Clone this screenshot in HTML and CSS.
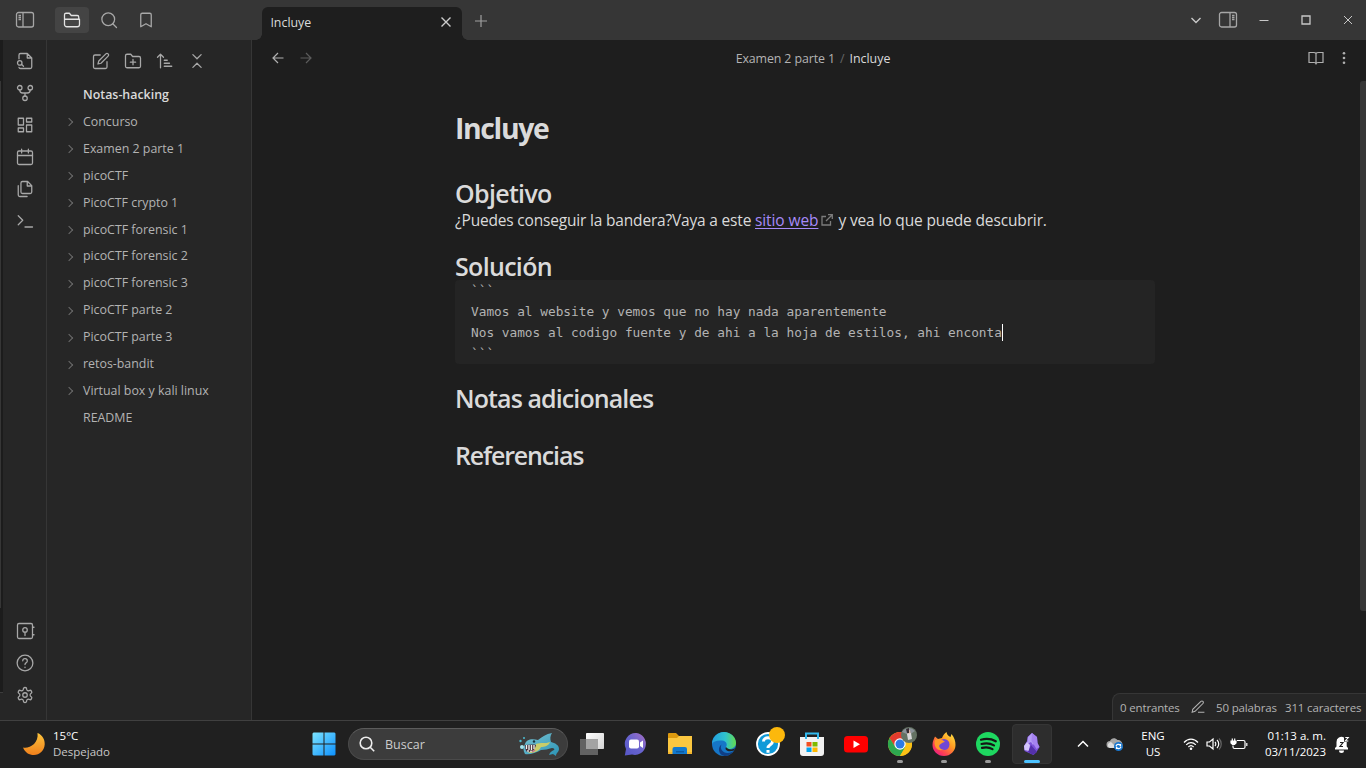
FILE: index.html
```html
<!DOCTYPE html>
<html lang="es">
<head>
<meta charset="utf-8">
<title>Incluye - Notas-hacking</title>
<link rel="stylesheet" href="styles.css">
</head>
<body>
<div class="app">
  <header class="titlebar">
    <div class="title-left">
      <span class="tbtn"><svg class="panel" viewBox="0 0 20 18"><rect x="1.5" y="1.5" width="17" height="14.5" rx="2"/><path d="M8 1.5V16M3.5 4.5h2.5M3.5 6.5h2.5M3.5 8.5h2.5"/></svg></span>
      <span class="tbtn active"><svg class="ico" viewBox="0 0 24 24"><path d="M22 18a3 3 0 0 1-3 3H5a3 3 0 0 1-3-3V5a2 2 0 0 1 2-2h4.500l2.500 3H19a2 2 0 0 1 2 2v3M2 11h20v7"/></svg></span>
      <span class="tbtn"><svg class="ico" viewBox="0 0 24 24"><circle cx="11" cy="11" r="8.500"/><path d="m22 22-5-5"/></svg></span>
      <span class="tbtn"><svg class="ico" viewBox="0 0 24 24"><path d="m19 21-7-4-7 4V5a2 2 0 0 1 2-2h10a2 2 0 0 1 2 2v16z"/></svg></span>
    </div>
    <div class="tab"><span class="t-tab">Incluye</span><svg class="x" viewBox="0 0 12 12"><path d="m1.500 1.500 9 9M10.500 1.500l-9 9"/></svg></div>
    <svg class="plus" viewBox="0 0 12 12"><path d="M6 0v12M0 6h12"/></svg>
    <div class="win">
      <svg class="w-chev" viewBox="0 0 12 12"><path d="m1.500 4 4.500 4.500L10.500 4"/></svg>
      <svg class="panel" viewBox="0 0 20 18"><rect x="1.500" y="1.500" width="17" height="14.500" rx="2"/><path d="M12 1.500V16M14 4.500h2.500M14 6.500h2.500M14 8.500h2.500"/></svg>
      <svg class="w-min" viewBox="0 0 10 10"><path d="M.5 5.500h9"/></svg>
      <svg class="w-max" viewBox="0 0 10 10"><path d="M1 1h8v8H1z"/></svg>
      <svg class="w-close" viewBox="0 0 10 10"><path d="m1 1 8 8M9 1 1 9"/></svg>
    </div>
  </header>

  <div class="body">
    <div class="edge"><i class="edge-a"></i><i class="edge-b"></i><i class="edge-c"></i></div>
    <nav class="ribbon">
      <svg class="ico" viewBox="0 0 24 24"><path d="M4 9V4a2 2 0 0 1 2-2h9l6 6v12a2 2 0 0 1-2 2H6a2 2 0 0 1-2-1.500M15 2v6h6"/><circle cx="5" cy="14.500" r="3"/><path d="m10 19-2.500-2.500"/></svg>
      <svg class="ico" viewBox="0 0 24 24"><circle cx="12" cy="19" r="3"/><circle cx="5" cy="5" r="3"/><circle cx="19" cy="5" r="3"/><path d="M5 8c0 3 1.500 4 4 4h6c2.500 0 4-1 4-4M12 12v4"/></svg>
      <svg class="ico" viewBox="0 0 24 24"><path d="M3 3h7v9H3zM14 3h7v5h-7zM14 12h7v9h-7zM3 16h7v5H3z"/></svg>
      <svg class="ico" viewBox="0 0 24 24"><rect x="2" y="4" width="20" height="18" rx="2"/><path d="M16.500 1.500v5M7.500 1.500v5M2 10h20"/></svg>
      <svg class="ico" viewBox="0 0 24 24"><path d="M15.500 2H8.600a2 2 0 0 0-2 2v12a2 2 0 0 0 2 2h10.400a2 2 0 0 0 2-2V7.500zM15 2v6h6M3 7.600V20a2 2 0 0 0 2 2h9.800"/></svg>
      <svg class="ico" viewBox="0 0 24 24"><path d="m3 17 6-6-6-6M12 20h10"/></svg>
      <span class="grow"></span>
      <svg class="ico" viewBox="0 0 24 24"><rect x="2" y="2" width="20" height="20" rx="2"/><circle cx="12" cy="10.500" r="3"/><path d="M12 13.500V18M22 7h2M22 17h2"/></svg>
      <svg class="ico" viewBox="0 0 24 24"><circle cx="12" cy="12" r="10.500"/><path d="M9 9a3 3 0 0 1 6 .500c0 2-3 2.500-3 4.500M12 17.500v.500"/></svg>
      <svg class="ico" viewBox="0 0 24 24"><path d="M12.220 2h-.44a2 2 0 0 0-2 2v.18a2 2 0 0 1-1 1.730l-.43.250a2 2 0 0 1-2 0l-.15-.08a2 2 0 0 0-2.730.730l-.22.380a2 2 0 0 0 .73 2.730l.15.100a2 2 0 0 1 1 1.720v.510a2 2 0 0 1-1 1.740l-.15.090a2 2 0 0 0-.73 2.730l.22.380a2 2 0 0 0 2.730.730l.15-.08a2 2 0 0 1 2 0l.43.250a2 2 0 0 1 1 1.730V20a2 2 0 0 0 2 2h.44a2 2 0 0 0 2-2v-.18a2 2 0 0 1 1-1.730l.43-.25a2 2 0 0 1 2 0l.15.080a2 2 0 0 0 2.730-.73l.22-.39a2 2 0 0 0-.73-2.730l-.15-.08a2 2 0 0 1-1-1.740v-.5a2 2 0 0 1 1-1.740l.15-.09a2 2 0 0 0 .73-2.730l-.22-.38a2 2 0 0 0-2.730-.73l-.15.080a2 2 0 0 1-2 0l-.43-.25a2 2 0 0 1-1-1.730V4a2 2 0 0 0-2-2z"/><circle cx="12" cy="12" r="3"/></svg>
    </nav>
    <aside class="sidebar">
      <div class="tools">
        <svg class="ico" viewBox="0 0 24 24"><path d="M11 4H4a2 2 0 0 0-2 2v14a2 2 0 0 0 2 2h14a2 2 0 0 0 2-2v-7M18.500 2.500a2.120 2.120 0 0 1 3 3L12 15l-4 1 1-4z"/></svg>
        <svg class="ico" viewBox="0 0 24 24"><path d="M4 21h16a2 2 0 0 0 2-2V8a2 2 0 0 0-2-2h-8.500L9 3H4a2 2 0 0 0-2 2v14c0 1.100.9 2 2 2zM12 10v7M8.500 13.500h7"/></svg>
        <svg class="ico" viewBox="0 0 24 24"><path d="M11 11h4M11 15h7M11 19h10M2 7l4-4 4 4M6 4v17"/></svg>
        <svg class="ico" viewBox="0 0 24 24"><path d="m6.500 20.500 5.500-5.500 5.500 5.500M6.500 3.500 12 9l5.500-5.500"/></svg>
      </div>
      <ul class="tree">
        <li class="vault">Notas-hacking</li>
        <li class="dir">Concurso</li>
        <li class="dir">Examen 2 parte 1</li>
        <li class="dir">picoCTF</li>
        <li class="dir">PicoCTF crypto 1</li>
        <li class="dir">picoCTF forensic 1</li>
        <li class="dir">picoCTF forensic 2</li>
        <li class="dir">picoCTF forensic 3</li>
        <li class="dir">PicoCTF parte 2</li>
        <li class="dir">PicoCTF parte 3</li>
        <li class="dir">retos-bandit</li>
        <li class="dir">Virtual box y kali linux</li>
        <li>README</li>
      </ul>
    </aside>
    <main class="main">
      <div class="viewhead">
        <div class="nav">
          <svg viewBox="0 0 12 12"><path d="M11.500 6H1M6 1 1 6l5 5"/></svg>
          <svg class="dim" viewBox="0 0 12 12"><path d="M.5 6H11M6 1l5 5-5 5"/></svg>
        </div>
        <div class="crumbs"><span class="c1">Examen 2 parte 1</span><span class="sep">/</span><span class="c2">Incluye</span></div>
        <div class="acts">
          <svg class="book" viewBox="0 0 16 14"><path d="M8 2.500V13.500M8 2.500C7.500 1.500 6.500 1.500 5.500 1.500H1v10h5c1 0 2 .5 2 1.500 0-1 1-1.500 2-1.500h5v-10h-4.500C9.500 1.500 8.500 1.500 8 2.500z"/></svg>
          <svg class="dots" viewBox="0 0 4 14"><circle cx="2" cy="2.300" r="1.300"/><circle cx="2" cy="7" r="1.300"/><circle cx="2" cy="11.700" r="1.300"/></svg>
        </div>
      </div>
      <article class="note">
        <h1>Incluye</h1>
        <h2 class="a">Objetivo</h2>
        <p><span class="p1">¿Puedes conseguir la bandera?Vaya a este </span><a class="link">sitio web</a><svg class="ext" viewBox="0 0 12 12"><path d="M5 2.500H1v8.500h8.500V7M7 .700h4.300V5M11 1 5 7"/></svg><span class="p2">y vea lo que puede descubrir.</span></p>
        <h2 class="b">Solución</h2>
        <div class="code"><div>```</div><div>Vamos al website y vemos que no hay nada aparentemente</div><div class="cl"><span class="mono">Nos vamos al codigo fuente y de ahi a la hoja de estilos, ahi enconta</span><i class="caret"></i></div><div>```</div></div>
        <h2 class="c">Notas adicionales</h2>
        <h2 class="d">Referencias</h2>
      </article>
      <div class="scroll"></div>
      <div class="status"><span class="s1">0 entrantes</span><svg class="pen" viewBox="0 0 24 24"><path d="M12 21h11M17 2.500a2.120 2.120 0 0 1 3.500 3.500L7 19.500l-5 1.500 1-5z"/></svg><span class="s2">50 palabras</span><span class="s3">311 caracteres</span></div>
    </main>
  </div>

  <footer class="taskbar">
    <div class="weather">
      <svg viewBox="0 0 24 24"><defs><linearGradient id="moon" x1="0" y1="0" x2="0" y2="1"><stop offset="0" stop-color="#fcc43c"/><stop offset="1" stop-color="#f0801c"/></linearGradient></defs><path fill="url(#moon)" d="M15.500 1c5 2 7.500 6.500 7.200 11.500C22.300 18.500 17.500 23 12 23 7 23 3 20.500 1 15.500c6 1.500 16-4 14.500-14.500z"/></svg>
      <div class="wtext"><div class="k1">15°C</div><div class="k2">Despejado</div></div>
    </div>
    <svg class="start" viewBox="0 0 24 24"><defs><linearGradient id="wn" gradientUnits="userSpaceOnUse" x1="0" y1="0" x2="24" y2="24"><stop offset="0" stop-color="#7fe6ff"/><stop offset="1" stop-color="#0a8fff"/></linearGradient></defs><path fill="url(#wn)" d="M1.500.500h10v11H.500v-10zM12.500.500h10l1 1v10h-11zM.500 12.500h11v11h-10l-1-1zM12.500 12.500h11v10l-1 1h-10z"/></svg>
    <div class="search">
      <svg class="mag" viewBox="0 0 16 16"><circle cx="7" cy="7" r="5.800"/><path d="m11.200 11.200 4 4"/></svg>
      <span class="bus">Buscar</span>
      <svg class="fish" viewBox="0 0 42 25"><defs><linearGradient id="fs" x1="0" y1="0" x2="1" y2="1"><stop offset="0" stop-color="#7cc4d4"/><stop offset="1" stop-color="#2a93b4"/></linearGradient></defs>
        <path fill="url(#fs)" d="M6 12c1-4 6-6 13-4 4-3 8-6 14-7-2 3-2 6-1 9 4 1 8 3 8 7 0 3-3 4-3 7l-3-2-4 1c1-3 3-4 5-5 1-1 0-2-2-2-4 1-7 2-11 2-5 3-12 5-16 4-2-3-2-7 0-10z"/>
        <path fill="#c9cd6a" d="M17 12c5-2 9 0 14-2-1 4-6 5-9 5-2 4-6 6-13 6l6-4z"/>
        <path fill="#4b2c3a" d="M6 13c4 0 8-1 11 0-1 5-4 7-9 7-2-2-2-5-2-7z"/>
        <path stroke="#eef8f2" stroke-width="1.300" d="M7.500 13v4M10 13v5M12.500 13v5M15 13v4M9 20v-2M12 20v-1.500"/>
        <path stroke="#c56f95" stroke-width="1.500" d="m13 20 3-2"/>
        <circle cx="15" cy="9.500" r="1.200" fill="#17323e"/><circle cx="3" cy="15" r="2" fill="#a4e4ee"/><circle cx="1.500" cy="9" r="1.200" fill="#4bbbd0"/><circle cx="5" cy="6" r="1" fill="#4bbbd0"/></svg>
    </div>
    <div class="apps">
      <span class="app-i"><svg viewBox="0 0 24 24"><defs><linearGradient id="tv" x1="0" y1="0" x2="1" y2="1"><stop offset="0" stop-color="#fff"/><stop offset="1" stop-color="#d4d4d4"/></linearGradient></defs><rect x="6" y="1" width="18" height="16" rx=".8" fill="url(#tv)"/><path fill="#626262" d="M0 7h18v16H0z"/><path fill="#a3a3a3" d="M6 7h12v10H6z"/></svg></span>
      <span class="app-i"><svg viewBox="0 0 24 24"><defs><linearGradient id="tm" x1="1" y1="0" x2="0" y2="1"><stop offset="0" stop-color="#a66fc4"/><stop offset=".5" stop-color="#6864cf"/><stop offset="1" stop-color="#5656c6"/></linearGradient></defs><path fill="url(#tm)" d="M12.500 1A11 11 0 1 1 8 22.500L.800 23.500 2 17A11 11 0 0 1 12.500 1z"/><rect x="5" y="7.500" width="10" height="9" rx="2" fill="#fff"/><path fill="#fff" d="m16 10.500 3-2v7.500l-3-2z"/></svg></span>
      <span class="app-i"><svg viewBox="0 0 24 24"><path fill="#dd9a0f" d="M0 2q0-1 1-1h7l3 3v4H0z"/><path fill="#fbc740" d="M0 6h9l2-2h13v18H0z"/><path fill="#f4b52c" d="M0 20h24v2H0z"/><path fill="#1279ce" d="M4.500 22v-5q0-2 2-2h10.500q2 0 2 2v5z"/><path fill="#0c5aa2" d="M8 19h8v1.500H8z"/></svg></span>
      <span class="app-i"><svg viewBox="0 0 24 24"><defs><linearGradient id="eg" x1="0" y1="0" x2="1" y2="0"><stop offset="0" stop-color="#239fdf"/><stop offset=".55" stop-color="#2fc2cf"/><stop offset="1" stop-color="#64dc4e"/></linearGradient></defs><circle cx="12" cy="12" r="12" fill="#1676c7"/><path fill="url(#eg)" d="M0 12C0 5 5.500 0 12 0s12 5 12 11c0 4-4 6-7 6-2.500 0-3.500-1-3-2 1.500-2 1-6-4-6.500C5 8 1 9.500 0 12z"/><path fill="#103f85" d="M9.500 12.500c-2 4 1 8.500 6 8.500 3 0 5-1 6.500-2.500C20 22 16 24 12.500 24 6 23 5.500 15 9.500 12.500z"/><path fill="#202020" d="M14 15c2 3 7 3 9.500 1L22 18.500c-5 2-10 0-8-3.500z"/></svg></span>
      <span class="app-i"><svg class="over" viewBox="0 0 24 24"><circle cx="12" cy="12" r="11" fill="#109ad8" stroke="#fff" stroke-width="1.800"/><path fill="none" stroke="#fff" stroke-width="3" d="M7.500 9.500c0-5 9-5 9 0 0 3.500-4.500 3-4.500 6.500M12 18v2.800"/><circle cx="21" cy="3" r="8" fill="#fcb80c"/></svg></span>
      <span class="app-i"><svg viewBox="0 0 24 24"><path fill="#f2f2f2" d="M0 5h24v16q0 3-3 3H3q-3 0-3-3z"/><path fill="none" stroke="#32b9ee" stroke-width="2" d="M6 7V1.500h12V7"/><path fill="#f25022" d="M6.500 10h5v4.500h-5z"/><path fill="#7fba00" d="M12.500 10h5v4.500h-5z"/><path fill="#00a4ef" d="M6.500 15.500h5V20h-5z"/><path fill="#ffb900" d="M12.500 15.500h5V20h-5z"/></svg></span>
      <span class="app-i"><svg viewBox="0 0 24 24"><rect y="4" width="24" height="16.500" rx="3.500" fill="#f00"/><path fill="#fff" d="m9.500 8.500 6.500 3.700-6.500 3.700z"/></svg></span>
      <span class="app-i run"><svg class="over" viewBox="0 0 24 24"><circle cx="12" cy="12" r="12" fill="#fbc116"/><path fill="#e33b2e" d="M12 12h12A12 12 0 0 0 1.600 6L7 15z"/><path fill="#2da94f" d="M1.600 6A12 12 0 0 0 12 24l5.500-9.500H7z"/><path fill="#fbc116" d="M12 24A12 12 0 0 0 23 7H12l5.500 8z"/><circle cx="12" cy="12" r="5.700" fill="#fff"/><circle cx="12" cy="12" r="4.500" fill="#2c7be5"/><circle cx="21" cy="3" r="8" fill="#647263"/><path fill="#8b9299" d="M14 0a8 8 0 0 1 13-1l-6 4z"/><path fill="#dab1a0" d="m19-2 3 0 1 5-3 1z"/><path fill="#d8d8da" d="m19 2 4-1 1 6-4 1z"/><path fill="#342c31" d="m18-3 3-1v5h-2z"/></svg></span>
      <span class="app-i run"><svg viewBox="0 0 24 24"><defs><linearGradient id="ff" x1="1" y1="0" x2=".2" y2="1"><stop offset="0" stop-color="#fff04a"/><stop offset=".45" stop-color="#ff9a22"/><stop offset=".8" stop-color="#fb3d56"/><stop offset="1" stop-color="#e71b8b"/></linearGradient></defs><path fill="url(#ff)" d="M3 4.500 6 7l4-1c1-3 3-5 4.500-6 .5 3 2 4 4 5l1-3c3 4 4 7 4 11 0 6-5 11-11.500 11S.500 19 .500 13C.500 9 2 7 3 4.500z"/><circle cx="12" cy="12.500" r="5.500" fill="#7047d4"/><path fill="#ff9a28" d="M3 8c3-2 7-1 10 2-2 0-3 1-5 2.500C6 14 8 18 12 17.500c-6 3-11-3-9-9.500z"/></svg></span>
      <span class="app-i run"><svg viewBox="0 0 24 24"><circle cx="12" cy="12" r="12" fill="#1ed760"/><path fill="none" stroke="#151515" stroke-linecap="round" stroke-width="2.200" d="M5 7.800c5-1.400 10.500-.9 14.800 1.500M5.500 12c4.300-1.200 9-.7 12.500 1.400M6 15.900c3.500-1 7.500-.6 10.500 1.200"/></svg></span>
      <span class="app-i sel"><svg viewBox="0 0 24 24"><path fill="#7c52d8" d="m12 1 5 4 .500 6 2 4-3 5-3 3-9-4-.5-5 3-5 .5-4z"/><path fill="#b49cf5" d="m12 1-4 4-1 7 4-2 2 3 3-4z"/><path fill="#a583f0" d="m12 1 5 4 .5 6 2 4-3 2-5-8z"/><path fill="#d4c5fc" d="m7 10 3 3-1 6-4.500-1-.5-4z"/><path fill="#5431ab" d="m11 13 6 7-4 3-5-3z"/></svg></span>
    </div>
    <div class="tray">
      <svg class="t-up" viewBox="0 0 12 8"><path d="m1 6.500 5-5 5 5"/></svg>
      <svg class="t-cloud" viewBox="0 0 16 14"><path fill="#a7a7a7" d="M3 11a3.500 3.500 0 0 1 0-7C4 1 8 0 10.500 3c3 0 5 2 5 5v3z"/><path fill="#ddd" d="M3 11c-3-1-3-5 1-6l6 6z"/><circle cx="11.500" cy="9.500" r="4.500" fill="#1977cf"/><path fill="none" stroke="#fff" stroke-width="1.200" d="M9 9c1-2 3-2 4.500-.5V7M14 10c-1 2-3 2-4.500.5V12"/></svg>
      <div class="lang"><span class="g1">ENG</span><span class="g2">US</span></div>
      <svg class="t-wifi" viewBox="0 0 16 14"><path d="M1 5.500c4-4.500 10-4.500 14 0M3.200 7.800c3-3 6.600-3 9.600 0M5.400 10c1.700-1.700 3.500-1.700 5.200 0"/><circle cx="8" cy="11.800" r="1.300"/></svg>
      <svg class="t-vol" viewBox="0 0 16 14"><path d="M1 5v4h2.500L7 12V2L3.500 5zM9 5c1 1 1 3 0 4M11 3c2.300 2 2.300 6 0 8"/><path class="faint" d="M13 1.500c3 3 3 8 0 11"/></svg>
      <svg class="t-bat" viewBox="0 0 18 14"><path d="M7 3.500h6.500q1.500 0 1.500 1.500v5q0 1.500-1.500 1.500h-9Q3 11.500 3 10V8.500M16.800 6v3"/><path fill="#fff" d="M1 4h5v2L4.500 7.500H2.500L1 6zM2.300 4V1.500M4.700 4V1.500"/></svg>
      <div class="clock"><span class="h1c">01:13 a. m.</span><span class="h2c">03/11/2023</span></div>
      <svg class="t-bell" viewBox="0 0 15 17"><path fill="#fff" d="M0 13.500V12l1.500-1.500V6A5 5 0 0 1 9 1.500V6h2.700v4.500L13 12v1.500zM4 14.500h5a2.500 2.500 0 0 1-5 0z"/><path fill="none" stroke="#202020" d="M5 6.500h3l-3 4h3"/><path fill="none" stroke="#fff" stroke-width="1.100" d="M10.300 1.500h3l-3 3.500h3"/></svg>
    </div>
  </footer>
</div>
</body>
</html>
```
FILE: styles.css
```css
* { box-sizing: border-box; }
body { margin: 0; background: #1e1e1e; color: #dadada; font-family: "Open Sans", "Noto Sans", sans-serif; }
svg { display: block; flex: none; fill: none; overflow: visible; }
.app { width: 1366px; height: 768px; display: flex; flex-direction: column; overflow: hidden; }
.grow { flex: 1; }

.ico { width: 18px; height: 18px; stroke: #a8a8a8; stroke-width: 1.7; stroke-linecap: round; stroke-linejoin: round; }
.panel { width: 20px; height: 18px; stroke: #a6a6a6; stroke-width: 1.3; }

.titlebar { height: 40px; background: #363636; display: flex; flex: none; }
.title-left { width: 262px; padding: 7px 0 0 8px; display: flex; }
.tbtn { width: 34px; height: 26px; margin-right: 3px; border-radius: 4px; display: flex; align-items: center; justify-content: center; }
.tbtn:first-child { margin-right: 13px; }
.tbtn.active { background: #444; }
.tbtn.active .ico { stroke: #e3e3e3; }
.tab { position: relative; width: 200px; height: 33px; margin-top: 7px; padding: 0 10px 3px 8.4px; background: #1e1e1e; border-radius: 6px 6px 0 0; display: flex; align-items: center; justify-content: space-between; font-size: 12.4px; }
.tab::before, .tab::after { content: ""; position: absolute; bottom: 0; width: 6px; height: 6px; }
.tab::before { left: -6px; background: radial-gradient(circle at 0 0, #363636 5.5px, #1e1e1e 6px); }
.tab::after { right: -6px; background: radial-gradient(circle at 100% 0, #363636 5.5px, #1e1e1e 6px); }
.x { width: 12px; height: 12px; stroke: #ccc; stroke-width: 1.4; }
.plus { width: 12px; height: 12px; margin: 15px 0 0 13px; stroke: #a0a0a0; stroke-width: 1.2; }
.win { flex: 1; display: flex; justify-content: flex-end; align-items: center; padding-right: 13px; stroke: #c8c8c8; }
.w-chev { width: 12px; height: 12px; stroke-width: 1.4; margin-right: 16px; }
.win .panel { margin-right: 21px; }
.w-min, .w-max, .w-close { width: 10px; height: 10px; }
.w-min { margin-right: 32px; }
.w-max { margin-right: 32px; stroke-width: 1.3; }

.body { height: 680px; flex: none; display: flex; }
.edge { width: 3px; background: #1c1c1c; display: flex; flex-direction: column; }
.edge-a { height: 41px; }
.edge-b { height: 527px; border-left: 1px solid #363636; }
.edge-c { height: 28px; margin-top: auto; background: #262626; border-top: 1px solid #3c3c3c; }
.ribbon { width: 44px; background: #262626; border-right: 1px solid #363636; display: flex; flex-direction: column; align-items: center; gap: 14px; padding: 12px 0 16px; }
.sidebar { width: 205px; background: #262626; border-right: 1px solid #363636; }
.tools { display: flex; gap: 14px; padding: 12px 0 12px 45px; }
.tree { list-style: none; margin: 0; padding: 0; font-size: 12.4px; color: #b3b3b3; }
.tree li { height: 26.92px; line-height: 26.92px; padding-left: 36px; display: flex; align-items: center; white-space: nowrap; }
.tree .vault { color: #dadada; font-weight: 600; }
.tree .dir { padding-left: 19px; }
.tree .dir::before { content: ""; width: 5px; height: 5px; margin-right: 11px; border: solid #6c6c6c; border-width: 1.4px 1.4px 0 0; transform: rotate(45deg); box-sizing: content-box; }

.main { flex: 1; position: relative; background: #1e1e1e; }
.viewhead { height: 40px; display: flex; align-items: center; justify-content: space-between; padding: 0 17px 4px 20px; }
.nav, .acts { width: 60px; display: flex; gap: 16px; }
.nav svg { width: 12px; height: 12px; stroke: #b0b0b0; stroke-width: 1.2; }
.nav .dim { stroke: #5c5c5c; }
.acts { justify-content: flex-end; gap: 18px; padding-right: 3px; }
.book { width: 16px; height: 14px; stroke: #b0b0b0; stroke-width: 1.2; }
.dots { width: 4px; height: 14px; fill: #b0b0b0; }
.crumbs { font-size: 12.4px; display: flex; color: #b3b3b3; padding-left: 5px; }
.crumbs .c1 { letter-spacing: -.11px; }
.crumbs .sep { margin: 0 5px; color: #666; }
.crumbs .c2 { color: #dadada; }

.note { width: 700px; margin-left: 203px; padding-top: 28px; }
h1, h2, p { margin: 0; white-space: nowrap; }
h1 { font-size: 28.4px; line-height: 41px; font-weight: 700; letter-spacing: -1.35px; }
h2 { font-size: 25px; line-height: 28px; font-weight: 600; }
h2.a { margin-top: 30px; letter-spacing: -.68px; }
p { margin-top: 1px; height: 24px; line-height: 24px; font-size: 15.5px; display: flex; align-items: center; white-space: pre; }
.p1 { letter-spacing: -.185px; }
.p2 { letter-spacing: -.14px; }
.link { color: #a68af9; text-decoration: underline; text-underline-offset: 2px; letter-spacing: -.1px; }
.ext { width: 12px; height: 12px; margin: 0 5px 0 3px; stroke: #7c7c7c; stroke-width: 1.3; }
h2.b { margin-top: 20px; letter-spacing: -.68px; }
.code { height: 84px; background: #242424; border-radius: 4px; padding-left: 16px; font-family: "DejaVu Sans Mono", monospace; font-size: 12.79px; line-height: 21px; color: #b3b3b3; white-space: pre; overflow: hidden; }
.cl { display: flex; height: 21px; align-items: center; }
.caret { width: 1px; height: 17px; background: #fff; }
h2.c { margin-top: 20px; letter-spacing: -.9px; }
h2.d { margin-top: 29px; letter-spacing: -1.15px; }
.scroll { position: absolute; right: 0; top: 41px; width: 6px; height: 530px; background: #363636; border-radius: 3px 0 0 3px; }
.status { position: absolute; right: 0; bottom: 0; width: 254px; height: 27px; background: #262626; border: solid #363636; border-width: 1px 0 0 1px; border-radius: 8px 0 0 0; display: flex; align-items: center; padding-left: 7px; font-size: 11.5px; letter-spacing: -.15px; color: #b3b3b3; white-space: nowrap; }
.s1, .s2 { width: 61px; }
.pen { width: 14px; height: 14px; margin: 0 11px 0 10px; stroke: #b3b3b3; stroke-width: 1.8; }
.s3 { margin-left: 8px; }

.taskbar { height: 48px; background: #202020; border-top: 1px solid #404040; display: flex; align-items: center; font-size: 11.5px; color: #fff; white-space: nowrap; padding-bottom: 1px; }
.weather { width: 311.5px; padding-left: 22px; display: flex; align-items: center; gap: 7px; line-height: 16px; }
.weather svg { width: 24px; height: 24px; }
.k2 { color: #c8c8c8; }
.wtext { margin-top: -1px; }
.start { width: 24px; height: 24px; }
.search { width: 220px; height: 32px; margin-left: 12.5px; border-radius: 16px; background: #3c3c3c; border: 1px solid #4a4a4a; border-top-color: #5c5c5c; display: flex; align-items: center; padding: 0 6px 0 10px; color: #ccc; font-size: 12.5px; }
.mag { width: 16px; height: 16px; stroke: #eee; stroke-width: 1.6; margin-right: 10px; }
.bus { flex: 1; }
.fish { width: 42px; height: 25px; }
.apps { display: flex; margin-left: 4px; gap: 4px; }
.app-i { width: 40px; height: 40px; position: relative; border-radius: 4px; display: flex; align-items: center; justify-content: center; }
.app-i svg { width: 24px; height: 24px; }
.run::after, .sel::after { content: ""; position: absolute; left: 17px; bottom: 1px; width: 6px; height: 3px; border-radius: 2px; background: #9a9a9a; }
.sel { background: #2d2d2d; border: 1px solid #353535; }
.sel::after { left: 11px; bottom: 0; width: 16px; background: #4cc2ff; }
.tray { margin-left: 25px; display: flex; align-items: center; flex: 1; stroke: #fff; stroke-width: 1.2; }
.t-up { width: 12px; height: 8px; stroke-width: 1.5; }
.t-cloud { width: 16px; height: 14px; margin-left: 18px; stroke: none; }
.lang { width: 30px; margin-left: 15px; text-align: center; line-height: 16px; display: flex; flex-direction: column; align-items: center; }
.t-wifi { width: 16px; height: 14px; margin-left: 15px; }
.t-wifi circle { fill: #fff; stroke: none; }
.t-vol { width: 16px; height: 14px; margin-left: 7px; }
.faint { stroke: #666; }
.t-bat { width: 18px; height: 14px; margin-left: 8px; }
.clock { width: 70px; margin: -1px 0 0 8px; line-height: 16px; display: flex; flex-direction: column; align-items: flex-end; }
.t-bell { width: 15px; height: 17px; margin-left: 9px; stroke: none; }
```
